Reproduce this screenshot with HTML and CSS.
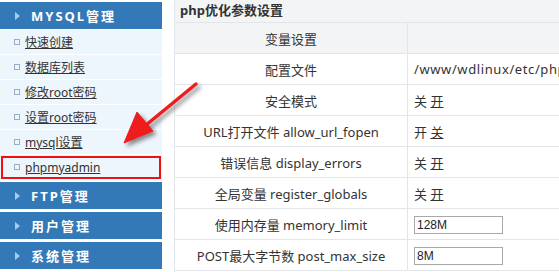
FILE: index.html
```html
<!DOCTYPE html>
<html lang="zh-CN">
<head>
  <meta charset="UTF-8" />
  <title>php优化参数设置</title>
  <link rel="stylesheet" href="styles.css">
</head>
<body>
  <div class="page">
    <div class="sidebar">
      <div class="menu-group">
        <div class="menu-head"><span class="tri"></span>MYSQL管理</div>
        <ul class="menu-list">
          <li><span class="dot"></span><a href="#">快速创建</a></li>
          <li><span class="dot"></span><a href="#">数据库列表</a></li>
          <li><span class="dot"></span><a href="#">修改root密码</a></li>
          <li><span class="dot"></span><a href="#">设置root密码</a></li>
          <li><span class="dot"></span><a href="#">mysql设置</a></li>
          <li class="marked"><span class="dot"></span><a href="#">phpmyadmin</a></li>
        </ul>
      </div>
      <div class="menu-group">
        <div class="menu-head"><span class="tri"></span>FTP管理</div>
      </div>
      <div class="menu-group">
        <div class="menu-head"><span class="tri"></span>用户管理</div>
      </div>
      <div class="menu-group">
        <div class="menu-head"><span class="tri"></span>系统管理</div>
      </div>
    </div>

    <div class="main">
      <div class="main-title">php优化参数设置</div>
      <table class="params">
        <tr class="head-row"><td class="name">变量设置</td><td class="value"></td></tr>
        <tr><td class="name">配置文件</td><td class="value path">/www/wdlinux/etc/php.ini</td></tr>
        <tr><td class="name">安全模式</td><td class="value">关 <a href="#">开</a></td></tr>
        <tr><td class="name">URL打开文件 allow_url_fopen</td><td class="value">开 <a href="#">关</a></td></tr>
        <tr><td class="name">错误信息 display_errors</td><td class="value">关 <a href="#">开</a></td></tr>
        <tr><td class="name">全局变量 register_globals</td><td class="value">关 <a href="#">开</a></td></tr>
        <tr><td class="name">使用内存量 memory_limit</td><td class="value"><input type="text" value="128M" /></td></tr>
        <tr><td class="name">POST最大字节数 post_max_size</td><td class="value"><input type="text" value="8M" /></td></tr>
      </table>
    </div>

    <!-- annotation arrow over the page -->
    <svg class="arrow" width="559" height="272" viewBox="0 0 559 272">
      <defs>
        <filter id="shadow" x="-20%" y="-20%" width="140%" height="140%">
          <feDropShadow dx="3" dy="3" stdDeviation="2" flood-color="#000" flood-opacity="0.45" />
        </filter>
      </defs>
      <g filter="url(#shadow)" fill="#ee1c1c" stroke="#ee1c1c">
        <line x1="196" y1="84" x2="140" y2="130" stroke-width="3.5" stroke-linecap="round" />
        <polygon points="124,143 137,112 153,131" stroke-width="1" stroke-linejoin="round" />
      </g>
    </svg>
  </div>
</body>
</html>
```

FILE: styles.css
```css
body {
  margin: 0;
  background: #fff;
  color: #333;
  font-family: "Noto Sans", "Noto Sans CJK SC", sans-serif;
  font-size: 13px;
  overflow: hidden;
}
.page {
  position: relative;
  display: flex;
  width: 559px;
  height: 272px;
  overflow: hidden;
}
.sidebar {
  width: 162px;
  flex-shrink: 0;
  padding-top: 2px;
}
.menu-group {
  margin-bottom: 2px;
}
.menu-group + .menu-group {
  margin-bottom: 3px;
}
.menu-head {
  display: flex;
  align-items: center;
  height: 27px;
  background: #3479b7;
  color: #fff;
  font-weight: bold;
  font-size: 13px;
  letter-spacing: 2px;
}
.tri {
  width: 0;
  height: 0;
  margin: 0 11px 0 15px;
  border-top: 4px solid transparent;
  border-bottom: 4px solid transparent;
  border-left: 5px solid #a3cdf2;
}
.menu-list {
  list-style: none;
  margin: 1px 0 0;
  padding: 0;
}
.menu-list li {
  display: flex;
  align-items: center;
  height: 24px;
  border-bottom: 1px solid #fff;
  background: #edf5fd;
  font-size: 12px;
}
.menu-list li.marked {
  outline: 2px solid #ee1111;
  outline-offset: -3px;
}
.dot {
  width: 4px;
  height: 4px;
  margin: 0 5px 0 14px;
  border: 1px solid #97aec8;
}
.menu-list a {
  color: #333;
  text-decoration: underline;
}
.main {
  margin-left: 12px;
  width: 400px;
  flex-shrink: 0;
  border-left: 1px solid #e3e5e8;
}
.main-title {
  height: 22px;
  line-height: 21px;
  padding-left: 5px;
  background: #f3f4f6;
  border-bottom: 1px solid #e3e5e8;
  font-weight: bold;
  font-size: 13px;
}
.params {
  border-collapse: collapse;
  width: 420px;
}
.params td {
  height: 30px;
  padding: 0;
  border-bottom: 1px solid #e3e5e8;
  white-space: nowrap;
}
.params .name {
  width: 232px;
  text-align: center;
  border-right: 1px solid #e3e5e8;
}
.params .value {
  padding-left: 6px;
}
.params .path {
  letter-spacing: 0.6px;
}
.params .head-row td {
  background: #f3f4f6;
}
.params a {
  color: #333;
}
.params input {
  box-sizing: border-box;
  width: 89px;
  height: 18px;
  padding: 0 2px;
  border: 1px solid #a9a9a9;
  font-family: "Liberation Sans", Arial, sans-serif;
  font-size: 12px;
  color: #222;
  vertical-align: middle;
}
.arrow {
  position: absolute;
  left: 0;
  top: 0;
  pointer-events: none;
}
```
